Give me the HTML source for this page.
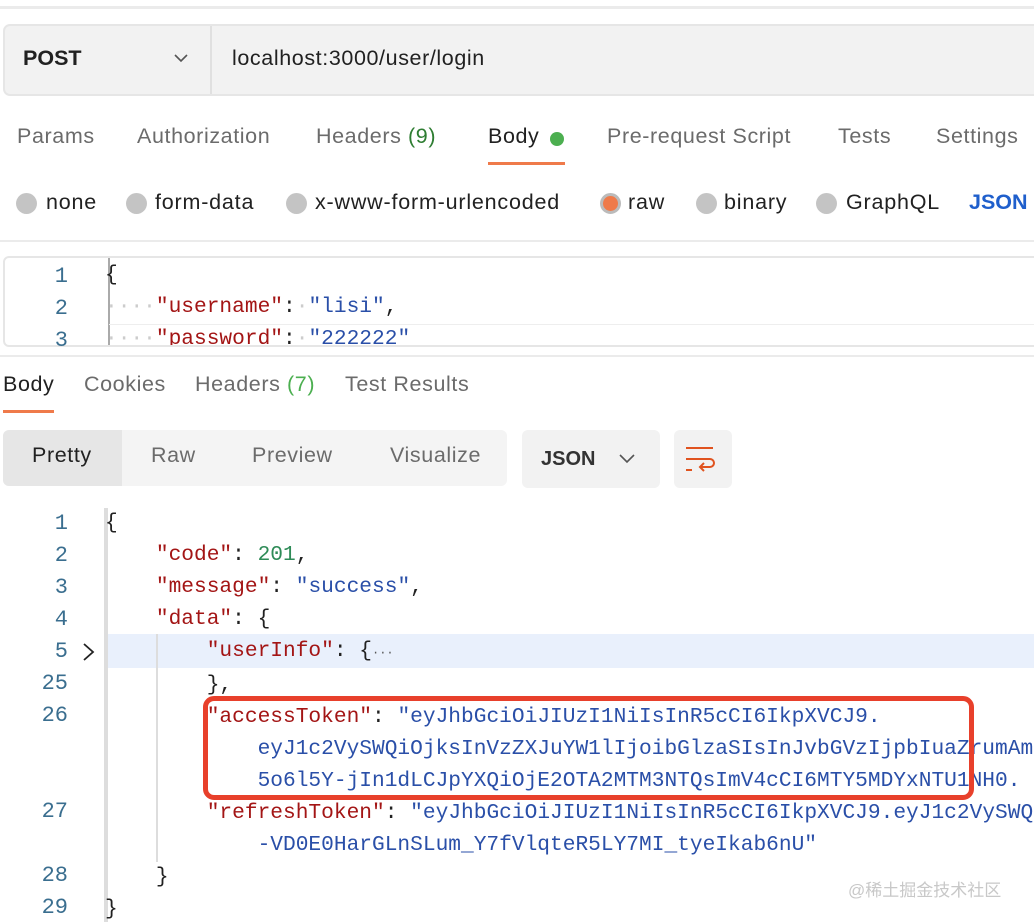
<!DOCTYPE html>
<html><head><meta charset="utf-8"><style>
*{margin:0;padding:0;box-sizing:border-box}
html,body{width:1034px;height:922px;overflow:hidden}
body{background:#fff;position:relative;font-family:"Liberation Sans",sans-serif;color:#212121}
#w{position:absolute;left:0;top:0;width:1034px;height:922px;overflow:hidden}
.a{position:absolute;white-space:pre}
.u{font-size:21.5px;letter-spacing:0.6px}
.t{font-size:21.5px;letter-spacing:0.6px;color:#6b6b6b;top:124px}
.r{font-size:21.5px;letter-spacing:0.8px;color:#212121;top:190px}
.dot{position:absolute;width:21px;height:21px;border-radius:50%;background:#c4c4c4;top:193px}
.hl{position:absolute;left:0;width:1034px;height:3px;background:#ebebeb}
.m{font-family:"Liberation Mono",monospace;font-size:21.2px;line-height:32px}
.ln{position:absolute;left:0;width:68px;text-align:right;color:#3a6e8f;font-family:"Liberation Mono",monospace;font-size:22px}
.k{color:#a31515}.s{color:#2a4fa8}.n{color:#2e8b57}
</style></head><body><div id="w">
<div class="hl" style="top:6px"></div>
<div style="position:absolute;left:3px;top:24px;width:1040px;height:72px;background:#f2f2f2;border:2px solid #e6e6e6;border-radius:7px"></div>
<div style="position:absolute;left:210px;top:26px;width:2px;height:68px;background:#e0e0e0"></div>
<div class="a" style="left:23px;top:46px;font-size:21.5px;font-weight:bold">POST</div>
<svg class="a" style="left:173px;top:53px" width="16" height="10"><path d="M2 2l6 6 6-6" stroke="#555" stroke-width="1.6" fill="none"/></svg>
<div class="a u" style="left:232px;top:46px">localhost:3000/user/login</div>

<div class="a t" style="left:17px">Params</div>
<div class="a t" style="left:137px">Authorization</div>
<div class="a t" style="left:316px">Headers <span style="color:#2e7d32">(9)</span></div>
<div class="a t" style="left:488px;color:#212121">Body</div>
<div style="position:absolute;left:550px;top:132px;width:14px;height:14px;border-radius:50%;background:#4caf50"></div>
<div style="position:absolute;left:488px;top:162px;width:77px;height:3px;background:#ef7a4a"></div>
<div class="a t" style="left:607px">Pre-request Script</div>
<div class="a t" style="left:838px">Tests</div>
<div class="a t" style="left:936px">Settings</div>

<div class="dot" style="left:16px"></div><div class="a r" style="left:46px">none</div>
<div class="dot" style="left:126px"></div><div class="a r" style="left:155px">form-data</div>
<div class="dot" style="left:286px"></div><div class="a r" style="left:315px">x-www-form-urlencoded</div>
<div class="dot" style="left:600px;background:#ef7a4a;border:3px solid #bbb"></div><div class="a r" style="left:628px">raw</div>
<div class="dot" style="left:696px"></div><div class="a r" style="left:724px">binary</div>
<div class="dot" style="left:816px"></div><div class="a r" style="left:846px">GraphQL</div>
<div class="a r" style="left:969px;color:#1f5fcc;font-weight:bold;letter-spacing:0">JSON</div>

<div class="hl" style="top:240px;height:2px"></div>
<div style="position:absolute;left:3px;top:256px;width:1040px;height:91px;border:2px solid #e6e6e6;border-radius:6px;overflow:hidden">
 <div style="position:absolute;left:103px;top:0;width:2px;height:91px;background:#aaa"></div>
 <div style="position:absolute;left:104px;top:66px;width:940px;height:1px;background:#eee"></div>
</div>
<div class="ln" style="top:261px;line-height:32px">1<br>2<br>3</div>
<div class="a m" style="left:105px;top:259px;height:86px;overflow:hidden;line-height:32px">{
<span style="color:#ccc">····</span><span class="k">"username"</span>:<span style="color:#ccc">·</span><span class="s">"lisi"</span>,
<span style="color:#ccc">····</span><span class="k">"password"</span>:<span style="color:#ccc">·</span><span class="s">"222222"</span></div>
<div class="hl" style="top:355px;height:2px"></div>

<div class="a u" style="left:3px;top:372px">Body</div>
<div style="position:absolute;left:3px;top:410px;width:51px;height:3px;background:#ef7a4a"></div>
<div class="a u" style="left:84px;top:372px;color:#6b6b6b">Cookies</div>
<div class="a u" style="left:195px;top:372px;color:#6b6b6b">Headers <span style="color:#4caf50">(7)</span></div>
<div class="a u" style="left:345px;top:372px;color:#6b6b6b">Test Results</div>

<div style="position:absolute;left:3px;top:430px;width:504px;height:56px;background:#f4f4f4;border-radius:6px"></div>
<div style="position:absolute;left:3px;top:430px;width:119px;height:56px;background:#e6e6e6;border-radius:6px 0 0 6px"></div>
<div class="a u" style="left:32px;top:443px">Pretty</div>
<div class="a u" style="left:151px;top:443px;color:#6b6b6b">Raw</div>
<div class="a u" style="left:252px;top:443px;color:#6b6b6b">Preview</div>
<div class="a u" style="left:390px;top:443px;color:#6b6b6b">Visualize</div>
<div style="position:absolute;left:522px;top:430px;width:138px;height:58px;background:#f2f2f2;border-radius:6px"></div>
<div class="a" style="left:541px;top:448px;font-size:20px;font-weight:bold;color:#333">JSON</div>
<svg class="a" style="left:618px;top:453px" width="18" height="11"><path d="M2 2l7 7 7-7" stroke="#555" stroke-width="1.6" fill="none"/></svg>
<div style="position:absolute;left:674px;top:430px;width:58px;height:58px;background:#f2f2f2;border-radius:6px"></div>
<svg class="a" style="left:684px;top:444px" width="40" height="30"><g stroke="#e0531f" stroke-width="2" fill="none"><path d="M2 4h27"/><path d="M2 15h24a4 4 0 0 1 0 8h-9"/><path d="M20 19l-4 4 4 4"/><path d="M2 26h6"/></g></svg>

<div style="position:absolute;left:104px;top:508px;width:4px;height:414px;background:#ddd"></div>
<div style="position:absolute;left:108px;top:634px;width:926px;height:34px;background:#e9f0fc"></div>
<div style="position:absolute;left:156px;top:634px;width:2px;height:228px;background:#ddd"></div>
<div class="ln" style="top:508px;line-height:32px">1<br>2<br>3<br>4<br>5<br>25<br>26<br><br><br>27<br><br>28<br>29</div>
<svg class="a" style="left:82px;top:642px" width="14" height="20"><path d="M2 2l9 8-9 8" stroke="#222" stroke-width="1.8" fill="none"/></svg>
<div class="a m" style="left:105px;top:507px;width:929px;overflow:hidden">{
    <span class="k">"code"</span>: <span class="n">201</span>,
    <span class="k">"message"</span>: <span class="s">"success"</span>,
    <span class="k">"data"</span>: {
        <span class="k">"userInfo"</span>: {<span style="font-size:12px;color:#555">···</span>
        },
        <span class="k">"accessToken"</span>: <span class="s">"eyJhbGciOiJIUzI1NiIsInR5cCI6IkpXVCJ9.
            eyJ1c2VySWQiOjksInVzZXJuYW1lIjoibGlzaSIsInJvbGVzIjpbIuaZrumAmueUqOaItyJdfQ
            5o6l5Y-jIn1dLCJpYXQiOjE2OTA2MTM3NTQsImV4cCI6MTY5MDYxNTU1NH0.</span>
        <span class="k">"refreshToken"</span>: <span class="s">"eyJhbGciOiJIUzI1NiIsInR5cCI6IkpXVCJ9.eyJ1c2VySWQiOjl9
            -VD0E0HarGLnSLum_Y7fVlqteR5LY7MI_tyeIkab6nU"</span>
    }
}</div>
<div style="position:absolute;left:203px;top:696px;width:771px;height:104px;border:5px solid #e8402b;border-radius:11px"></div>
<div class="a" style="left:848px;top:876px;font-size:17px;color:#c8c8c8;font-family:'Liberation Sans','Noto Sans CJK SC',sans-serif">@稀土掘金技术社区</div>
</div></body></html>
